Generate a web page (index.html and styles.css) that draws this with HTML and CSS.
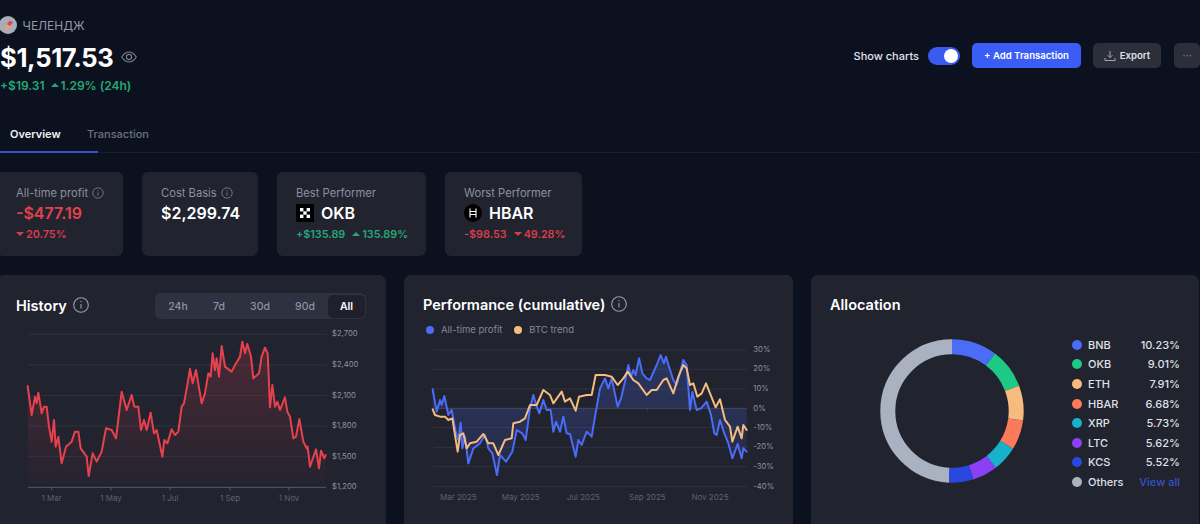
FILE: index.html
```html
<!DOCTYPE html>
<html lang="en">
<head>
<meta charset="utf-8">
<title>Portfolio</title>
<link rel="stylesheet" href="styles.css">
</head>
<body>
<div class="page">
  <header class="head">
    <div class="summary">
      <div class="brand">
        <svg class="brand-logo" viewBox="0 0 18 18"><circle cx="9" cy="9" r="9" fill="#a9adba"/><path d="M5 13 L8 8 L11 10 L8 14Z" fill="#f0a060"/><path d="M8 8 L11 4.5 L14 6.5 L11 10Z" fill="#e2404c"/></svg>
        <span>ЧЕЛЕНДЖ</span>
      </div>
      <div class="amount">
        <span>$1,517.53</span>
        <svg class="eye" viewBox="0 0 16 12" fill="none" stroke="#7d8190" stroke-width="1.1"><path d="M.7 6C3 2.4 5.4 1 8 1s5 1.4 7.3 5C13 9.6 10.6 11 8 11S3 9.6.7 6Z"/><circle cx="8" cy="6" r="2.6"/></svg>
      </div>
      <div class="change"><span>+$19.31</span><span class="up-tri"></span><span>1.29% (24h)</span></div>
    </div>
    <div class="actions">
      <span class="show-label">Show charts</span>
      <span class="toggle"><span class="knob"></span></span>
      <button class="btn btn-primary">+ Add Transaction</button>
      <button class="btn btn-dark"><svg class="dl" viewBox="0 0 12 12" fill="none" stroke="#a4a7b2" stroke-width="1"><path d="M6 1v6.5M3.6 5.2 6 7.6l2.4-2.4M1 8v2.5h10V8"/></svg>Export</button>
      <button class="btn btn-more">···</button>
    </div>
  </header>

  <nav class="tabs">
    <span class="tab tab-active">Overview</span>
    <span class="tab">Transaction</span>
  </nav>

  <section class="cards">
    <article class="card card-a">
      <div class="card-label">All-time profit <svg class="info" viewBox="0 0 12 12" fill="none" stroke="#6f7382"><circle cx="6" cy="6" r="5.2"/><path d="M6 5.4v3.2M6 3.2v1"/></svg></div>
      <div class="card-value red">-$477.19</div>
      <div class="card-sub red"><span class="down-tri"></span><span>20.75%</span></div>
    </article>
    <article class="card card-b">
      <div class="card-label">Cost Basis <svg class="info" viewBox="0 0 12 12" fill="none" stroke="#6f7382"><circle cx="6" cy="6" r="5.2"/><path d="M6 5.4v3.2M6 3.2v1"/></svg></div>
      <div class="card-value">$2,299.74</div>
    </article>
    <article class="card card-c">
      <div class="card-label">Best Performer</div>
      <div class="card-value coin">
        <svg class="coin-icon" viewBox="0 0 18 18"><rect width="18" height="18" fill="#000"/><g fill="#fff"><rect x="4" y="4" width="3.4" height="3.4"/><rect x="10.6" y="4" width="3.4" height="3.4"/><rect x="7.3" y="7.3" width="3.4" height="3.4"/><rect x="4" y="10.6" width="3.4" height="3.4"/><rect x="10.6" y="10.6" width="3.4" height="3.4"/></g></svg>
        <span>OKB</span>
      </div>
      <div class="card-sub green"><span>+$135.89</span><span class="up-tri up-gap"></span><span>135.89%</span></div>
    </article>
    <article class="card card-d">
      <div class="card-label">Worst Performer</div>
      <div class="card-value coin">
        <svg class="coin-icon" viewBox="0 0 18 18"><circle cx="9" cy="9" r="9" fill="#000"/><path d="M6 4.5v9M12 4.5v9M6 7.5h6M6 10.5h6" stroke="#fff" stroke-width="1.1" fill="none"/></svg>
        <span>HBAR</span>
      </div>
      <div class="card-sub red"><span>-$98.53</span><span class="down-tri up-gap"></span><span>49.28%</span></div>
    </article>
  </section>

  <section class="panels">
    <article class="panel">
      <div class="panel-head">
        <h2 class="panel-title">History <svg class="info-lg" viewBox="0 0 16 16" fill="none" stroke="#9a9eac" stroke-width="1.1"><circle cx="8" cy="8" r="7.3"/><path d="M8 7v4.6M8 4v1.3"/></svg></h2>
        <div class="segment">
          <span class="seg seg-24">24h</span><span class="seg seg-7">7d</span><span class="seg seg-30">30d</span><span class="seg seg-90">90d</span><span class="seg seg-all">All</span>
        </div>
      </div>
      <svg class="chart chart-history" viewBox="-9 165 1167 597">
        <defs>
          <linearGradient id="redfill" x1="0" y1="0" x2="0" y2="1"><stop offset="0" stop-color="#e5414c" stop-opacity=".22"/><stop offset="1" stop-color="#e5414c" stop-opacity=".01"/></linearGradient>
          <linearGradient id="bluefill" x1="0" y1="0" x2="0" y2="1"><stop offset="0" stop-color="#4a6cf7" stop-opacity=".24"/><stop offset="1" stop-color="#4a6cf7" stop-opacity=".12"/></linearGradient>
        </defs>
        <g class="grid">
          <path d="M85 193H980M85 285H980M85 377H980M85 468H980M85 560H980"/>
        </g>
        <polygon fill="url(#redfill)" points="83,652 83,348 95,435 105,380 110,400 115,368 125,430 132,410 140,410 147,470 155,515 162,450 167,530 175,500 185,580 198,530 215,515 225,485 235,485 242,535 260,560 266,618 278,550 290,575 305,545 318,475 335,480 348,505 365,365 380,420 395,375 403,410 415,410 423,480 432,450 440,480 452,428 462,490 470,480 487,560 493,510 502,520 515,478 525,495 535,485 545,410 552,400 562,345 570,297 578,340 588,300 605,400 615,370 625,310 632,320 638,250 645,300 650,265 657,320 665,228 675,290 695,305 705,285 720,260 727,215 735,250 742,222 753,260 760,325 777,310 785,260 795,233 803,250 810,412 817,345 825,410 832,395 840,420 855,382 862,425 870,440 880,505 888,500 898,447 910,515 920,535 923,530 930,590 948,538 957,595 963,542 973,565 977,555 977,652"/>
        <polyline class="line line-red" points="83,348 95,435 105,380 110,400 115,368 125,430 132,410 140,410 147,470 155,515 162,450 167,530 175,500 185,580 198,530 215,515 225,485 235,485 242,535 260,560 266,618 278,550 290,575 305,545 318,475 335,480 348,505 365,365 380,420 395,375 403,410 415,410 423,480 432,450 440,480 452,428 462,490 470,480 487,560 493,510 502,520 515,478 525,495 535,485 545,410 552,400 562,345 570,297 578,340 588,300 605,400 615,370 625,310 632,320 638,250 645,300 650,265 657,320 665,228 675,290 695,305 705,285 720,260 727,215 735,250 742,222 753,260 760,325 777,310 785,260 795,233 803,250 810,412 817,345 825,410 832,395 840,420 855,382 862,425 870,440 880,505 888,500 898,447 910,515 920,535 923,530 930,590 948,538 957,595 963,542 973,565 977,555"/>
        <path class="axis" d="M83 652H978M155 652v9M333 652v9M510 652v9M690 652v9M867 652v9"/>
        <g class="xlabels">
          <text x="155" y="694">1 Mar</text><text x="333" y="694">1 May</text><text x="510" y="694">1 Jul</text><text x="690" y="694">1 Sep</text><text x="867" y="694">1 Nov</text>
        </g>
        <g class="ylabels">
          <text x="996" y="199">$2,700</text><text x="996" y="291">$2,400</text><text x="996" y="383">$2,100</text><text x="996" y="474">$1,800</text><text x="996" y="566">$1,500</text><text x="996" y="658">$1,200</text>
        </g>
      </svg>
    </article>

    <article class="panel">
      <div class="panel-head panel-head-tight">
        <h2 class="panel-title">Performance (cumulative) <svg class="info-lg" viewBox="0 0 16 16" fill="none" stroke="#9a9eac" stroke-width="1.1"><circle cx="8" cy="8" r="7.3"/><path d="M8 7v4.6M8 4v1.3"/></svg></h2>
      </div>
      <div class="legend-line">
        <span class="key"><i class="dot dot-blue"></i>All-time profit</span>
        <span class="key"><i class="dot dot-orange"></i>BTC trend</span>
      </div>
      <svg class="chart chart-perf" viewBox="-3 180 1167 552">
        <g class="grid">
          <path d="M85 210H1025M85 268H1025M85 327H1025M85 443H1025M85 502H1025M85 560H1025M85 620H1025"/>
        </g>
        <polygon fill="url(#bluefill)" points="83,385 83,328 95,395 105,360 110,375 118,348 130,405 140,390 152,455 160,480 167,428 172,505 180,470 190,550 205,505 225,490 240,465 250,505 262,520 276,585 285,525 303,545 322,515 335,450 352,460 362,480 375,385 385,345 395,380 403,400 415,360 425,390 437,390 445,455 453,425 465,455 475,410 485,460 495,462 512,530 520,480 530,495 545,455 560,470 570,410 585,325 600,295 610,325 620,295 638,380 648,355 660,305 670,255 678,290 685,270 692,285 702,235 712,280 725,295 735,300 755,255 767,225 777,250 783,230 795,270 805,300 815,315 835,240 845,255 855,390 862,335 875,390 888,385 905,365 918,405 928,460 935,465 945,420 958,460 970,490 982,535 998,492 1010,535 1015,505 1025,515 1025,385"/>
        <path class="zero" d="M85 385H1025M160 385v6M347 385v6M535 385v6M727 385v6"/>
        <polyline class="line line-blue" points="83,328 95,395 105,360 110,375 118,348 130,405 140,390 152,455 160,480 167,428 172,505 180,470 190,550 205,505 225,490 240,465 250,505 262,520 276,585 285,525 303,545 322,515 335,450 352,460 362,480 375,385 385,345 395,380 403,400 415,360 425,390 437,390 445,455 453,425 465,455 475,410 485,460 495,462 512,530 520,480 530,495 545,455 560,470 570,410 585,325 600,295 610,325 620,295 638,380 648,355 660,305 670,255 678,290 685,270 692,285 702,235 712,280 725,295 735,300 755,255 767,225 777,250 783,230 795,270 805,300 815,315 835,240 845,255 855,390 862,335 875,390 888,385 905,365 918,405 928,460 935,465 945,420 958,460 970,490 982,535 998,492 1010,535 1015,505 1025,515"/>
        <polyline class="line line-orange" points="83,388 90,405 105,410 120,410 130,420 142,415 158,515 165,465 175,460 185,505 195,490 215,485 235,462 250,490 265,490 280,525 300,480 320,475 325,430 345,425 360,415 375,375 395,375 415,330 435,345 445,370 470,335 480,365 495,355 512,392 522,350 545,345 560,345 572,285 585,285 600,285 620,290 638,315 655,295 668,275 685,300 700,310 725,345 740,330 755,330 775,300 785,295 805,340 820,290 835,255 845,265 855,315 865,310 877,350 890,340 903,310 915,340 932,382 945,358 960,420 975,440 982,485 998,440 1010,475 1015,435 1025,450"/>
        <g class="xlabels">
          <text x="160" y="661">Mar 2025</text><text x="347" y="661">May 2025</text><text x="535" y="661">Jul 2025</text><text x="727" y="661">Sep 2025</text><text x="915" y="661">Nov 2025</text>
        </g>
        <g class="ylabels">
          <text x="1045" y="217">30%</text><text x="1045" y="274">20%</text><text x="1045" y="334">10%</text><text x="1045" y="392">0%</text><text x="1045" y="450">-10%</text><text x="1045" y="508">-20%</text><text x="1045" y="568">-30%</text><text x="1045" y="626">-40%</text>
        </g>
      </svg>
    </article>

    <article class="panel">
      <div class="panel-head panel-head-alloc">
        <h2 class="panel-title">Allocation</h2>
      </div>
      <div class="alloc">
        <svg class="donut" viewBox="0 0 146 146" fill="none" stroke-width="15">
          <g transform="rotate(-90 73 73)">
            <circle cx="73" cy="73" r="64.2" pathLength="100" stroke="#aab2c2" stroke-dasharray="49.3 50.7" stroke-dashoffset="-50.7"/>
            <circle cx="73" cy="73" r="64.2" pathLength="100" stroke="#4a6cf7" stroke-dasharray="10.23 89.77" stroke-dashoffset="0"/>
            <circle cx="73" cy="73" r="64.2" pathLength="100" stroke="#1ec985" stroke-dasharray="9.01 90.99" stroke-dashoffset="-10.23"/>
            <circle cx="73" cy="73" r="64.2" pathLength="100" stroke="#f5bb7f" stroke-dasharray="7.91 92.09" stroke-dashoffset="-19.24"/>
            <circle cx="73" cy="73" r="64.2" pathLength="100" stroke="#fb7a5c" stroke-dasharray="6.68 93.32" stroke-dashoffset="-27.15"/>
            <circle cx="73" cy="73" r="64.2" pathLength="100" stroke="#17b1cc" stroke-dasharray="5.73 94.27" stroke-dashoffset="-33.83"/>
            <circle cx="73" cy="73" r="64.2" pathLength="100" stroke="#8b40f5" stroke-dasharray="5.62 94.38" stroke-dashoffset="-39.56"/>
            <circle cx="73" cy="73" r="64.2" pathLength="100" stroke="#2a48e0" stroke-dasharray="5.52 94.48" stroke-dashoffset="-45.18"/>
          </g>
        </svg>
        <ul class="alloc-list">
          <li><i class="dot c-bnb"></i><span class="sym">BNB</span><span class="pct">10.23%</span></li>
          <li><i class="dot c-okb"></i><span class="sym">OKB</span><span class="pct">9.01%</span></li>
          <li><i class="dot c-eth"></i><span class="sym">ETH</span><span class="pct">7.91%</span></li>
          <li><i class="dot c-hbar"></i><span class="sym">HBAR</span><span class="pct">6.68%</span></li>
          <li><i class="dot c-xrp"></i><span class="sym">XRP</span><span class="pct">5.73%</span></li>
          <li><i class="dot c-ltc"></i><span class="sym">LTC</span><span class="pct">5.62%</span></li>
          <li><i class="dot c-kcs"></i><span class="sym">KCS</span><span class="pct">5.52%</span></li>
          <li><i class="dot c-oth"></i><span class="sym">Others</span><span class="pct view-all">View all</span></li>
        </ul>
      </div>
    </article>
  </section>
</div>
</body>
</html>
```

FILE: styles.css
```css
* { box-sizing: border-box; }
html, body { margin: 0; height: 524px; overflow: hidden; background: #0b111e; }
body { font-family: Inter, "Noto Sans", sans-serif; color: #fff; }
.page { width: 1202px; margin-left: -3px; padding-top: 16px; }

.head { display: flex; justify-content: space-between; align-items: flex-start; }
.summary { padding-left: 3px; }
.brand { display: flex; align-items: center; gap: 6px; height: 18px; margin-left: -1.5px; font-size: 12px; color: #9598a5; }
.brand-logo { width: 18px; height: 18px; }
.amount { display: flex; align-items: center; gap: 8px; height: 46px; font-size: 25.6px; font-weight: 700; letter-spacing: -.35px; }
.eye { width: 16px; height: 12px; }
.change { display: flex; align-items: center; height: 10px; font-size: 12px; font-weight: 600; color: #25a877; }
.up-tri { width: 0; height: 0; margin: 0 2px 0 6px; border-left: 4px solid transparent; border-right: 4px solid transparent; border-bottom: 4.5px solid currentColor; }
.down-tri { width: 0; height: 0; margin-right: 2px; border-left: 4px solid transparent; border-right: 4px solid transparent; border-top: 4.5px solid currentColor; }
.up-gap { margin-left: 7px; }

.actions { display: flex; align-items: center; margin-top: 27px; height: 25px; margin-right: -1px; }
.show-label { font-size: 11px; font-weight: 500; color: #e2e4ea; margin-right: 9px; }
.toggle { display: flex; align-items: center; justify-content: flex-end; width: 32px; height: 18px; padding-right: 2.5px; border-radius: 9px; background: #3b5bf0; margin-right: 12px; }
.knob { width: 14px; height: 14px; border-radius: 50%; background: #fff; }
.btn { display: flex; align-items: center; justify-content: center; height: 25px; border: 0; border-radius: 5px; font-family: inherit; font-size: 9.6px; font-weight: 600; color: #fff; padding: 0; }
.btn-primary { width: 109px; background: #3a5ef5; margin-right: 12px; }
.btn-dark { width: 68px; background: #2c2e3a; color: #dfe1e6; margin-right: 13px; gap: 4px; }
.dl { width: 12px; height: 12px; }
.btn-more { width: 26px; background: #2c2e3a; color: #72758a; }

.tabs { position: relative; display: flex; height: 29px; margin-top: 34px; border-bottom: 1px solid #1a2030; font-size: 11px; font-weight: 500; }
.tab { padding-left: 13px; line-height: 20px; color: #6e7282; width: 77px; }
.tab-active { color: #f2f3f6; font-weight: 600; }
.tab-active::after { content: ""; position: absolute; left: 3px; bottom: -1px; width: 98px; height: 2px; background: #3654c8; }

.cards { display: flex; gap: 19px; margin-top: 19px; }
.card { height: 84px; padding: 14px 0 0 19px; border-radius: 6px; background: #21232f; }
.card-a { width: 126px; }
.card-b { width: 116px; }
.card-c { width: 149px; }
.card-d { width: 137px; }
.card-label { display: flex; align-items: center; gap: 4px; height: 14px; font-size: 11.2px; color: #8d909e; }
.info { width: 12px; height: 12px; }
.card-value { display: flex; align-items: center; height: 22px; margin-top: 2px; font-size: 16px; font-weight: 600; }
.coin { gap: 7px; }
.coin-icon { width: 18px; height: 18px; }
.card-sub { display: flex; align-items: center; height: 14px; margin-top: 3px; font-size: 10.8px; font-weight: 600; }
.red { color: #e5414c; }
.card-sub.red { color: #d93d4a; }
.green { color: #25a877; }

.panels { display: grid; grid-template-columns: 389px 389px 388px; gap: 18px; margin-top: 19px; }
.panel { height: 260px; border-radius: 7px; background: #21232f; }
.panel-head { display: flex; align-items: flex-start; justify-content: space-between; height: 50px; padding: 18px 20px 0 19px; }
.panel-head-tight { height: 44px; padding-top: 17px; }
.panel-head-alloc { padding-top: 17px; }
.panel-title { display: flex; align-items: center; gap: 6px; height: 24px; margin: 0; font-size: 14.5px; font-weight: 600; color: #fff; }
.info-lg { width: 16px; height: 16px; }
.segment { display: flex; align-items: center; width: 211px; height: 26px; padding-left: 1px; border-radius: 6px; background: #2e3140; font-size: 10.5px; font-weight: 500; color: #8e92a0; }
.seg { display: flex; align-items: center; justify-content: center; height: 23px; }
.seg-24 { width: 44px; }
.seg-7 { width: 38px; }
.seg-30 { width: 44px; }
.seg-90 { width: 46px; }
.seg-all { width: 37px; border-radius: 5px; background: #1f202c; color: #fff; font-weight: 600; }

.legend-line { display: flex; gap: 12px; height: 21px; padding-left: 22px; font-size: 9.5px; color: #858896; }
.key { display: flex; align-items: center; gap: 7px; height: 21px; }
.dot { display: block; width: 8px; height: 8px; border-radius: 50%; flex: none; }
.dot-blue { background: #4a6cf7; }
.dot-orange { background: #f5bb7f; }

.chart { display: block; width: 389px; }
.chart-history { height: 199px; }
.chart-perf { height: 184px; }
.grid path { fill: none; stroke: #2f3241; stroke-width: 3; }
.axis { fill: none; stroke: #555a6c; stroke-width: 3; }
.zero { fill: none; stroke: #444a5f; stroke-width: 3; }
.line { fill: none; stroke-width: 6; stroke-linejoin: round; stroke-linecap: round; }
.line-red { stroke: #e8414e; }
.line-blue { stroke: #4a6cf7; }
.line-orange { stroke: #f5bb7f; }
.xlabels text { font-size: 24px; fill: #5e6272; text-anchor: middle; }
.ylabels text { font-size: 23px; fill: #9094a2; }

.alloc { display: flex; justify-content: space-between; align-items: flex-start; padding: 0 19px 0 68px; }
.donut { width: 146px; height: 146px; margin-top: 13px; }
.alloc-list { width: 108px; margin: 10px 0 0; padding: 0; list-style: none; font-size: 11px; font-weight: 500; color: #dfe1e6; }
.alloc-list li { display: flex; align-items: center; height: 19.6px; }
.alloc-list .dot { width: 10px; height: 10px; margin-right: 6px; }
.pct { margin-left: auto; }
.view-all { color: #3654c8; }
.c-bnb { background: #4a6cf7; }
.c-okb { background: #1ec985; }
.c-eth { background: #f5bb7f; }
.c-hbar { background: #fb7a5c; }
.c-xrp { background: #17b1cc; }
.c-ltc { background: #8b40f5; }
.c-kcs { background: #2a48e0; }
.c-oth { background: #aab2c2; }
```
